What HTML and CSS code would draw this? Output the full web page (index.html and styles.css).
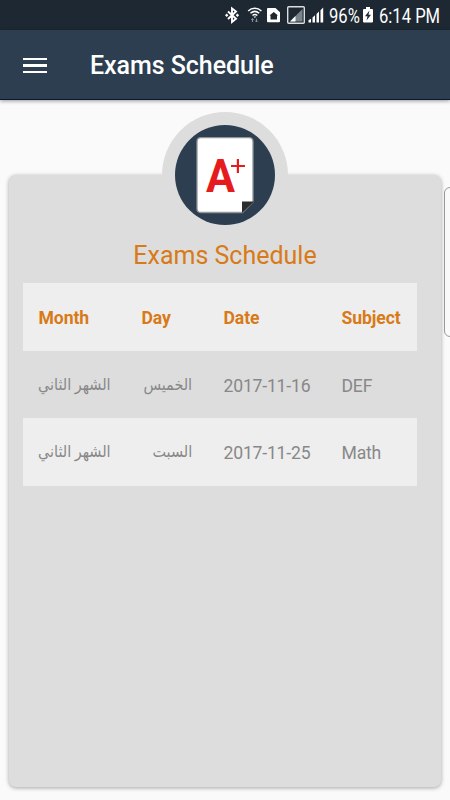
FILE: index.html
```html
<!DOCTYPE html>
<html lang="en">
<head>
<meta charset="utf-8">
<title>Exams Schedule</title>
<link rel="stylesheet" href="styles.css">
</head>
<body>
<div class="status">
  <svg class="status-icons" width="104" height="30" viewBox="0 0 104 30">
    <g fill="none" stroke="#fff" stroke-width="1.9"><path d="M3 11.500l8 7.300-4 3.200V8.500l4 3-8 7.500"/></g>
    <path d="M0 15.200l1.700-1.700 1.700 1.700-1.700 1.700zM10.700 15.200l1.700-1.700 1.700 1.700-1.700 1.700z" fill="#fff"/>
    <g fill="none" stroke="#fff" stroke-width="1.5"><path d="M23.200 11c3.800-3.600 9.400-3.600 13.200 0M25.500 13.300c2.600-2.300 6.100-2.300 8.700 0M27.500 15.500c1.500-1.300 3.300-1.300 4.800 0"/></g>
    <path d="M28.500 16.500h2.800l-1.400 1.500z" fill="#fff"/>
    <path d="M27.500 22v-3.500m-1.300 1.300l1.300-1.300 1.300 1.300M31.500 18.500V22m-1.300-1.300l1.300 1.300 1.300-1.300" fill="none" stroke="#87919a"/>
    <g transform="translate(5)">
      <path fill="#fff" fill-rule="evenodd" d="M38 8h7.500l4.500 4.200V21.200q0 1-1 1H38q-1 0-1-1V9q0-1 1-1zM39.500 15.500h1v4h6.500v-4h1l-4.250-3.500z"/>
      <rect x="57.700" y="6.700" width="16.600" height="16.600" rx="1" fill="none" stroke="#ddd" stroke-width="1.400"/>
      <path d="M60 21.500L72.500 9v12.500z" fill="#7a838a"/>
      <path d="M60 21.500h5.500V16z" fill="#fff"/>
      <path d="M78.500 22.500v-2.200l2.500-1.500v3.700zM82.500 22.500v-5l2.500-2.200v7.200zM86.500 22.500v-8.500l2.500-2.500v11zM90.500 22.500V10.200L93.200 7.500v15z" fill="#fff"/>
    </g>
  </svg>
  <span class="percent">96%</span>
  <svg class="battery" width="10" height="30" viewBox="0 0 10 30"><path d="M1 9h2V7h4v2h2q1 0 1 1v11.500q0 1-1 1H1q-1 0-1-1V10q0-1 1-1z" fill="#fff"/><path d="M6.500 10.500L2 16.200h2.500l-1 4.300L8 14.700H5.500z" fill="#1d2832"/></svg>
  <span class="clock">6:14 PM</span>
</div>
<header class="bar">
  <div class="menu"><i></i><i></i><i></i></div>
  <h1>Exams Schedule</h1>
</header>
<main class="card">
  <div class="badge">
    <svg width="100" height="100" viewBox="0 0 100 100">
      <circle cx="50" cy="50" r="50" fill="#2c3e50"/>
      <path d="M26 12.700h48q4 0 4 4V77L67.500 87.500H26q-4 0-4-4V16.700q0-4 4-4z" fill="#fff" stroke="#929699" stroke-width="1.300"/>
      <path d="M67 88V76.500h12z" fill="#2c2c2c"/>
      <text class="grade" x="31" y="67" textLength="29" lengthAdjust="spacingAndGlyphs">A</text>
      <path d="M56 41h14M62.900 34v14" fill="none" stroke="#e51b1e" stroke-width="2.200"/>
    </svg>
  </div>
  <h2>Exams Schedule</h2>
  <table>
    <colgroup><col class="month"><col class="day"><col class="date"><col class="subject"></colgroup>
    <thead><tr><th>Month</th><th>Day</th><th>Date</th><th>Subject</th></tr></thead>
    <tbody>
      <tr><td class="ar" dir="rtl"><span>الشهر الثاني</span></td><td class="ar" dir="rtl"><span>الخميس</span></td><td>2017-11-16</td><td>DEF</td></tr>
      <tr><td class="ar" dir="rtl"><span>الشهر الثاني</span></td><td class="ar" dir="rtl"><span>السبت</span></td><td>2017-11-25</td><td>Math</td></tr>
    </tbody>
  </table>
</main>
<div class="edge-handle"></div>
</body>
</html>
```
FILE: styles.css
```css
* { box-sizing: border-box; }
body {
  margin: 0;
  width: 450px;
  height: 800px;
  overflow: hidden;
  position: relative;
  background: #fafafa;
  font-family: Roboto, "DejaVu Sans", sans-serif;
}
.status {
  height: 30px;
  background: #1d2832;
  color: #fff;
  display: flex;
  align-items: center;
  padding-left: 225px;
  font-size: 20px;
  line-height: 30px;
  white-space: nowrap;
}
.status-icons { flex: none; }
.percent, .clock {
  flex: none;
  height: 30px;
  padding-top: 1px;
  transform: scaleX(.83);
  transform-origin: left;
}
.percent { width: 34px; }
.battery { flex: none; margin-right: 6px; }
.bar {
  height: 70px;
  background: #2c3e50;
  border-bottom: 1px solid #081733;
  box-shadow: 0 1px 4px rgba(0, 0, 0, .4);
  display: flex;
  align-items: center;
  padding: 3px 0 0 23px;
}
.menu { width: 67px; display: grid; gap: 4px; margin-top: -1px; }
.menu i { width: 24px; height: 2.6px; background: #fff; }
h1 { margin: 0; color: #fff; font-size: 25px; letter-spacing: -.05px; line-height: 30px; font-weight: 500; white-space: nowrap; }
.card {
  margin: 75px 9px 0;
  width: 432px;
  height: 612px;
  border-radius: 7px;
  background: #ddd;
  box-shadow: 0 1px 4px rgba(0, 0, 0, .35);
  display: flow-root;
}
.badge {
  width: 126px;
  height: 126px;
  margin: -63px auto 0;
  padding: 13px;
  border-radius: 50%;
  background: #ddd;
}
.badge svg { display: block; }
.grade { font: 700 46px Roboto, sans-serif; fill: #e51b1e; }
h2 {
  margin: 2px 0 11px;
  text-align: center;
  color: #d87a17;
  font-size: 25px;
  line-height: 32px;
  font-weight: 400;
}
table { width: 394px; margin-left: 13.5px; border-collapse: collapse; table-layout: fixed; }
.month { width: 103px; }
.day { width: 82px; }
.date { width: 118px; }
.subject { width: 91px; }
tr { height: 67.6px; }
tr:nth-child(odd) { background: #eee; }
tbody tr:nth-child(odd) { background: none; }
tbody tr:nth-child(even) { background: #eee; }
th, td { padding: 3px 15px 0 16px; text-align: left; font-size: 17.6px; letter-spacing: -.1px; white-space: nowrap; }
th { color: #d87a17; font-weight: 700; }
td { color: #888; letter-spacing: -.2px; }
td.ar { padding-top: 0; text-align: right; font-size: 16px; letter-spacing: 0; }
.ar span { display: inline-block; transform: scaleX(.9); transform-origin: right; }
.edge-handle {
  position: absolute;
  left: 444px;
  top: 187px;
  width: 12px;
  height: 150px;
  border: 1px solid #999;
  border-radius: 6px;
  background: #fafafa;
}
```
